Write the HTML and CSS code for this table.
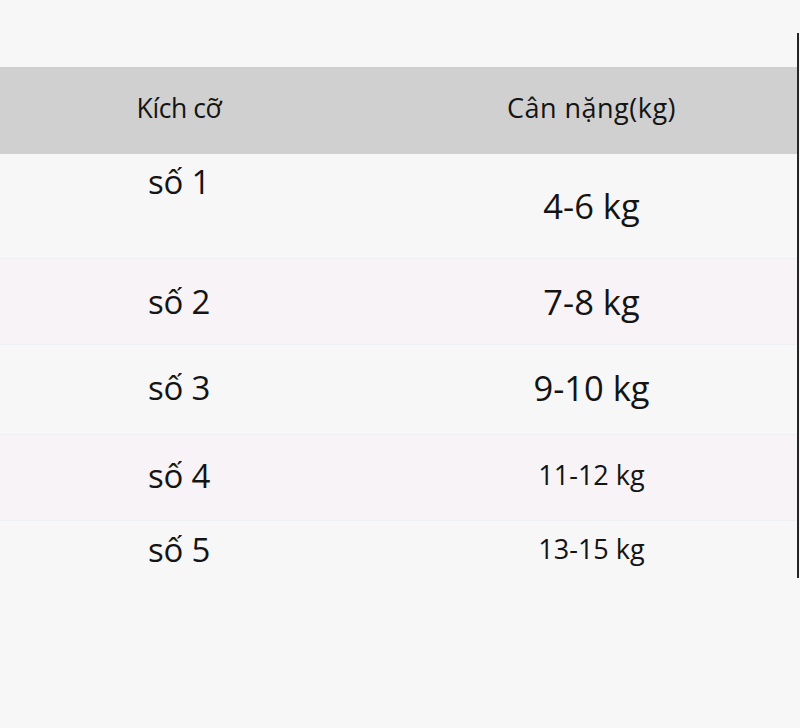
FILE: index.html
```html
<!DOCTYPE html>
<html lang="vi">
<head>
<meta charset="utf-8">
<title>Bảng kích cỡ</title>
<link rel="stylesheet" href="styles.css">
</head>
<body>
<div class="sheet">
  <div class="table">
    <div class="caption"></div>
    <div class="row head">
      <div class="cell size">Kích cỡ</div>
      <div class="cell weight">Cân nặng(kg)</div>
    </div>
    <div class="row r1">
      <div class="cell size top">số 1</div>
      <div class="cell weight big">4-6 kg</div>
    </div>
    <div class="row r2 tint">
      <div class="cell size">số 2</div>
      <div class="cell weight big">7-8 kg</div>
    </div>
    <div class="row r3">
      <div class="cell size">số 3</div>
      <div class="cell weight big">9-10 kg</div>
    </div>
    <div class="row r4 tint">
      <div class="cell size">số 4</div>
      <div class="cell weight small">11-12 kg</div>
    </div>
    <div class="row r5">
      <div class="cell size">số 5</div>
      <div class="cell weight small">13-15 kg</div>
    </div>
  </div>
</div>
</body>
</html>
```
FILE: styles.css
```css
html, body {
  margin: 0;
  background: #f7f7f7;
}

body {
  font-family: "Open Sans", "Noto Sans", sans-serif;
  color: #141414;
}

.sheet {
  padding-top: 33px;
}

.table {
  width: 797px;
  border-right: 2px solid #262626;
}

.caption {
  height: 34px;
}

.row {
  display: grid;
  grid-template-columns: 358px 1fr;
  align-items: center;
  border-bottom: 1px solid #eeeff2;
  box-sizing: border-box;
}

.cell {
  text-align: center;
  line-height: 1.2;
}

.weight {
  padding-left: 28px;
}

.size {
  font-size: 33px;
  letter-spacing: -0.2px;
  font-weight: 500;
}

.big {
  font-size: 34.5px;
  font-weight: 500;
}

.small {
  font-size: 27px;
  font-weight: 500;
}

.head {
  height: 87px;
  background: #d0d0d0;
  border-bottom: none;
}

.head .cell {
  padding-bottom: 4px;
  font-weight: 500;
}

.head .size {
  font-size: 26.5px;
  letter-spacing: -0.4px;
}

.head .weight {
  font-size: 27px;
  letter-spacing: 0.5px;
}

.tint {
  background: #f7f3f6;
}

.r1 { height: 105px; }
.r2 { height: 86px; }
.r3 { height: 90px; }
.r4 { height: 86px; }
.r5 { height: 57px; border-bottom: none; }

.top {
  align-self: start;
  padding-top: 8px;
}

.r3 .cell, .r4 .cell {
  padding-bottom: 4px;
}
```
